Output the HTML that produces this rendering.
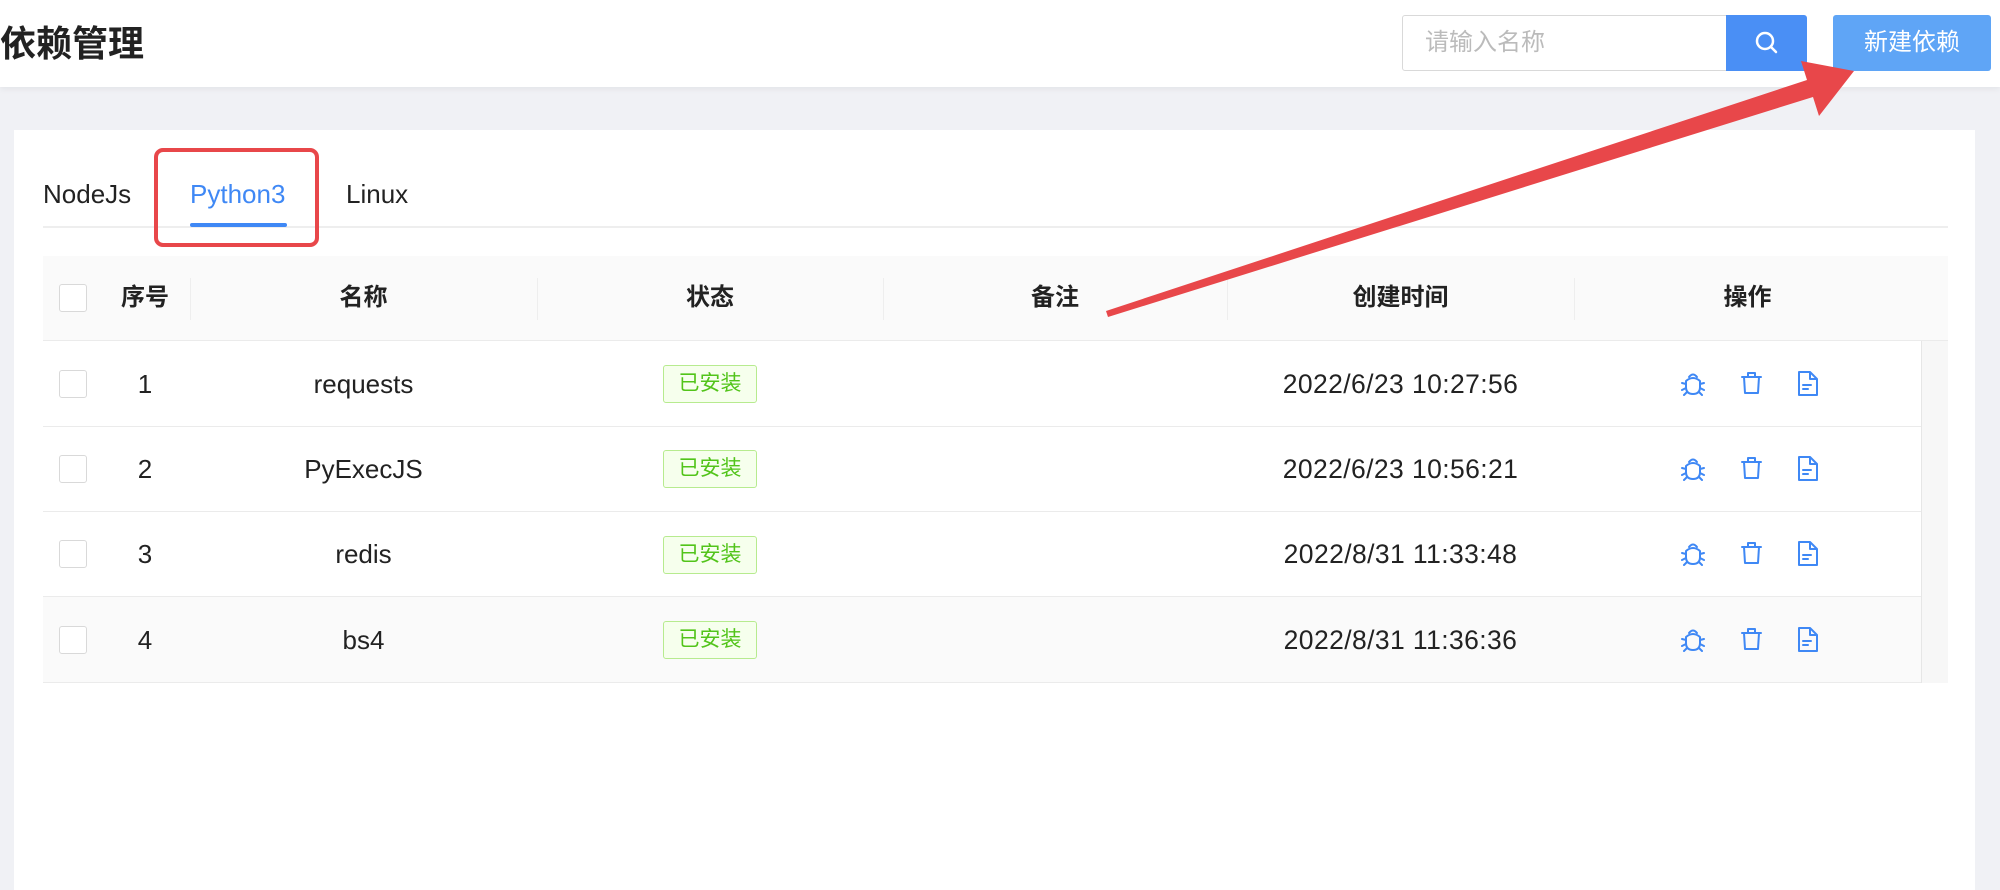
<!DOCTYPE html>
<html><head><meta charset="utf-8"><style>
*{margin:0;padding:0;box-sizing:border-box}
body{width:2000px;height:873px;background:#f0f1f5;position:relative;overflow:hidden;font-family:"Liberation Sans","Noto Sans CJK SC",sans-serif;color:#222}
.a{position:absolute}
.hdr{left:0;top:0;width:2000px;height:87px;background:#fff;box-shadow:0 2px 6px rgba(0,0,0,.06)}
.card{left:14px;top:130px;width:1961px;height:760px;background:#fff}
.cell{position:absolute;text-align:center;font-size:26px;line-height:30px}
.hd{font-size:24px;font-weight:bold;color:#222}
.dt{font-size:26.5px;letter-spacing:.4px}
.tag{position:absolute;left:663px;width:94px;height:38px;border:1px solid #b7eb8f;background:#f6ffed;color:#52c41a;font-size:21px;line-height:36px;text-align:center;border-radius:3px}
.cb{position:absolute;left:59px;width:28px;height:28px;border:1px solid #d9d9d9;border-radius:3px;background:#fff}
.sep{position:absolute;top:278px;width:1px;height:42px;background:#eee}
.row{position:absolute;left:43px;width:1878px;border-bottom:1px solid #ebebeb}
</style></head><body>
<div class="a hdr"></div>
<div class="a" style="left:0;top:22px;font-size:36px;font-weight:bold;line-height:44px;color:#222">依赖管理</div>
<div class="a" style="left:1402px;top:15px;width:326px;height:56px;border:1px solid #d9d9d9;border-radius:3px 0 0 3px;background:#fff;font-size:24px;color:#bbb;line-height:54px;padding-left:22px">请输入名称</div>
<div class="a" style="left:1726px;top:15px;width:81px;height:56px;background:#4a8ff5;border-radius:0 3px 3px 0">
<svg width="81" height="56"><circle cx="39" cy="26" r="8" fill="none" stroke="#fff" stroke-width="2.5"/><line x1="45" y1="32" x2="50" y2="37" stroke="#fff" stroke-width="2.5" stroke-linecap="round"/></svg></div>
<div class="a" style="left:1833px;top:15px;width:158px;height:56px;background:#5fa5f6;border-radius:3px;color:#fff;font-size:24px;line-height:56px;text-align:center">新建依赖</div>

<div class="a card"></div>
<div class="a" style="left:43px;top:179px;font-size:26px;line-height:30px">NodeJs</div>
<div class="a" style="left:190px;top:179px;font-size:26px;line-height:30px;color:#3f88f5">Python3</div>
<div class="a" style="left:346px;top:179px;font-size:26px;line-height:30px">Linux</div>
<div class="a" style="left:43px;top:226px;width:1905px;height:2px;background:#eee"></div>
<div class="a" style="left:190px;top:223px;width:97px;height:4px;background:#3f88f5;border-radius:2px"></div>
<div class="a" style="left:154px;top:148px;width:165px;height:99px;border:4px solid #e8474a;border-radius:9px"></div>

<div class="a" style="left:43px;top:256px;width:1905px;height:85px;background:#fafafa;border-bottom:1px solid #ebebeb"></div>
<div class="cb" style="top:284px"></div>
<div class="cell hd" style="left:100px;width:90px;top:283px">序号</div>
<div class="sep" style="left:190px"></div><div class="sep" style="left:537px"></div><div class="sep" style="left:883px"></div><div class="sep" style="left:1227px"></div><div class="sep" style="left:1574px"></div>
<div class="cell hd" style="left:190px;width:347px;top:283px">名称</div>
<div class="cell hd" style="left:537px;width:346px;top:283px">状态</div>
<div class="cell hd" style="left:883px;width:344px;top:283px">备注</div>
<div class="cell hd" style="left:1227px;width:347px;top:283px">创建时间</div>
<div class="cell hd" style="left:1574px;width:347px;top:283px">操作</div>
<div class="a" style="left:1921px;top:341px;width:27px;height:342px;background:#f7f7f7;border-left:1px solid #e6e6e6"></div>

<div class="row" style="top:341px;height:86px"></div>
<div class="row" style="top:427px;height:85px"></div>
<div class="row" style="top:512px;height:85px"></div>
<div class="row" style="top:597px;height:86px;background:#fafafa"></div>

<svg width="0" height="0" style="position:absolute"><defs>
<g id="ic" fill="none" stroke="#3f88f5" stroke-width="2" stroke-linecap="round" stroke-linejoin="round">
<g transform="translate(0,0)"><path d="M5 10 Q12 4 19 10 L19 16 Q19 23 12 23 Q5 23 5 16 Z"/><path d="M8 6 Q12 1 16 6"/><path d="M5 13 L1 12 M19 13 L23 12 M5 17 L1 19 M19 17 L23 19 M6 21 L3 24 M18 21 L21 24"/></g>
<g transform="translate(60,0)"><path d="M1 6 H20 M7 6 V2 H14 V6 M3 6 L4 22 H17 L18 6"/></g>
<g transform="translate(116,0)"><path d="M2 1 H13 L20 8 V24 H2 Z M13 1 V8 H20 M6 14 H14 M6 18 H11"/></g>
</g></defs></svg>

<div class="cb" style="top:370px"></div><div class="cell" style="left:100px;width:90px;top:369px">1</div><div class="cell" style="left:190px;width:347px;top:369px">requests</div><div class="tag" style="top:365px">已安装</div><div class="cell dt" style="left:1227px;width:347px;top:369px">2022/6/23 10:27:56</div>
<svg class="a" style="left:1681px;top:371px" width="140" height="26"><use href="#ic"/></svg>

<div class="cb" style="top:455px"></div><div class="cell" style="left:100px;width:90px;top:454px">2</div><div class="cell" style="left:190px;width:347px;top:454px">PyExecJS</div><div class="tag" style="top:450px">已安装</div><div class="cell dt" style="left:1227px;width:347px;top:454px">2022/6/23 10:56:21</div>
<svg class="a" style="left:1681px;top:456px" width="140" height="26"><use href="#ic"/></svg>

<div class="cb" style="top:540px"></div><div class="cell" style="left:100px;width:90px;top:539px">3</div><div class="cell" style="left:190px;width:347px;top:539px">redis</div><div class="tag" style="top:536px">已安装</div><div class="cell dt" style="left:1227px;width:347px;top:539px">2022/8/31 11:33:48</div>
<svg class="a" style="left:1681px;top:541px" width="140" height="26"><use href="#ic"/></svg>

<div class="cb" style="top:626px"></div><div class="cell" style="left:100px;width:90px;top:625px">4</div><div class="cell" style="left:190px;width:347px;top:625px">bs4</div><div class="tag" style="top:621px">已安装</div><div class="cell dt" style="left:1227px;width:347px;top:625px">2022/8/31 11:36:36</div>
<svg class="a" style="left:1681px;top:627px" width="140" height="26"><use href="#ic"/></svg>

<svg class="a" style="left:0;top:0" width="2000" height="873"><polygon fill="#e8474a" points="1106,311 1807,80 1801,61 1854,71 1819,116 1813,97 1108,317"/></svg>
</body></html>
